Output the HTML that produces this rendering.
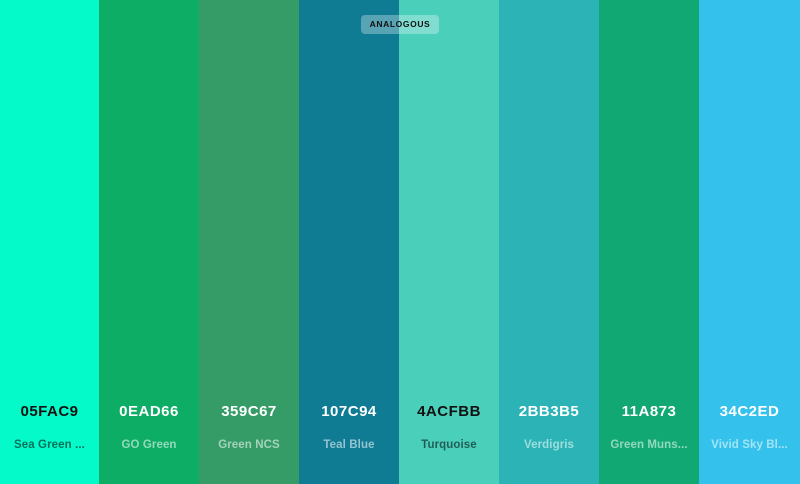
<!DOCTYPE html>
<html><head><style>
body{margin:0;width:800px;height:484px;overflow:hidden;font-family:"Liberation Sans",sans-serif}
.w{display:flex;height:484px}
.c{flex:0 0 100px;position:relative}
.c:first-child{flex-basis:99px}
.h{position:absolute;top:403px;left:0;right:0;text-align:center;font-size:15px;font-weight:bold;letter-spacing:0.5px}
.n{position:absolute;top:439px;left:0;right:0;text-align:center;font-size:11.5px;font-weight:bold;white-space:nowrap;letter-spacing:0.1px}
.d .h{color:#111}.d .n{color:rgba(0,0,0,.55)}
.l .h{color:#fff}.l .n{color:rgba(255,255,255,.55)}
.tag{position:absolute;left:361px;top:15px;width:78px;height:19px;border-radius:4px;background:rgba(255,255,255,.3);font-size:8.5px;font-weight:bold;letter-spacing:0.6px;text-align:center;line-height:19px;color:#111}
</style></head><body>
<div class="w">
<div class="c d" style="background:#05FAC9"><div class="h">05FAC9</div><div class="n">Sea Green ...</div></div>
<div class="c l" style="background:#0EAD66"><div class="h">0EAD66</div><div class="n">GO Green</div></div>
<div class="c l" style="background:#359C67"><div class="h">359C67</div><div class="n">Green NCS</div></div>
<div class="c l" style="background:#107C94"><div class="h">107C94</div><div class="n">Teal Blue</div></div>
<div class="c d" style="background:#4ACFBB"><div class="h">4ACFBB</div><div class="n">Turquoise</div></div>
<div class="c l" style="background:#2BB3B5"><div class="h">2BB3B5</div><div class="n">Verdigris</div></div>
<div class="c l" style="background:#11A873"><div class="h">11A873</div><div class="n">Green Muns...</div></div>
<div class="c l" style="background:#34C2ED;flex-basis:101px"><div class="h">34C2ED</div><div class="n">Vivid Sky Bl...</div></div>
</div>
<div class="tag">ANALOGOUS</div>
</body></html>
